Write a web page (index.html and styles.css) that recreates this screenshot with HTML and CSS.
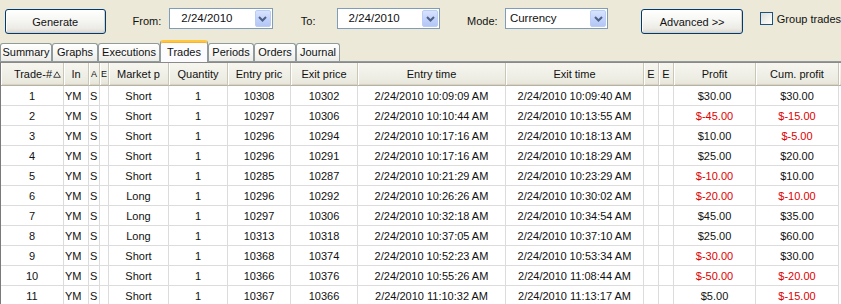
FILE: index.html
```html
<!DOCTYPE html>
<html>
<head>
<meta charset="utf-8">
<link rel="stylesheet" href="styles.css">
</head>
<body>
<div class="toolbar">
  <button class="btn btn-generate">Generate</button>
  <span class="lbl lbl-from">From:</span>
  <div class="combo date">
    <span class="combo-text">2/24/2010</span>
    <span class="dd"><svg width="9" height="6" viewBox="0 0 9 6"><path d="M1 1 L4.5 4.5 L8 1" fill="none" stroke="#4D6185" stroke-width="2"/></svg></span>
  </div>
  <span class="lbl lbl-to">To:</span>
  <div class="combo date">
    <span class="combo-text">2/24/2010</span>
    <span class="dd"><svg width="9" height="6" viewBox="0 0 9 6"><path d="M1 1 L4.5 4.5 L8 1" fill="none" stroke="#4D6185" stroke-width="2"/></svg></span>
  </div>
  <span class="lbl lbl-mode">Mode:</span>
  <div class="combo mode">
    <span class="combo-text">Currency</span>
    <span class="dd"><svg width="9" height="6" viewBox="0 0 9 6"><path d="M1 1 L4.5 4.5 L8 1" fill="none" stroke="#4D6185" stroke-width="2"/></svg></span>
  </div>
  <button class="btn btn-adv">Advanced &gt;&gt;</button>
  <span class="check"></span>
  <span class="lbl lbl-group">Group trades</span>
</div>

<div class="tabs">
  <div class="tab w-summary">Summary</div>
  <div class="tab w-graphs">Graphs</div>
  <div class="tab w-exec">Executions</div>
  <div class="tab tab-sel w-trades">Trades</div>
  <div class="tab w-periods">Periods</div>
  <div class="tab w-orders">Orders</div>
  <div class="tab w-journal">Journal</div>
</div>

<div class="grid">
  <div class="row hdr">
    <div class="c sortcol">Trade-#<svg class="sort" width="8" height="7" viewBox="0 0 8 7"><path d="M4 0.8 L7.3 6.3 L0.7 6.3 Z" fill="none" stroke="#444" stroke-width="1"/></svg></div>
    <div class="c">In</div>
    <div class="c narrow">A</div>
    <div class="c narrow">E</div>
    <div class="c">Market p</div>
    <div class="c">Quantity</div>
    <div class="c">Entry pric</div>
    <div class="c">Exit price</div>
    <div class="c">Entry time</div>
    <div class="c">Exit time</div>
    <div class="c">E</div>
    <div class="c">E</div>
    <div class="c">Profit</div>
    <div class="c">Cum. profit</div>
    <div class="c fill"></div>
  </div>

  <div class="row"><div class="c">1</div><div class="c l">YM</div><div class="c l1">S</div><div class="c"></div><div class="c">Short</div><div class="c">1</div><div class="c">10308</div><div class="c">10302</div><div class="c">2/24/2010 10:09:09 AM</div><div class="c">2/24/2010 10:09:40 AM</div><div class="c"></div><div class="c"></div><div class="c">$30.00</div><div class="c">$30.00</div><div class="fill"></div></div>
  <div class="row"><div class="c">2</div><div class="c l">YM</div><div class="c l1">S</div><div class="c"></div><div class="c">Short</div><div class="c">1</div><div class="c">10297</div><div class="c">10306</div><div class="c">2/24/2010 10:10:44 AM</div><div class="c">2/24/2010 10:13:55 AM</div><div class="c"></div><div class="c"></div><div class="c neg">$-45.00</div><div class="c neg">$-15.00</div><div class="fill"></div></div>
  <div class="row"><div class="c">3</div><div class="c l">YM</div><div class="c l1">S</div><div class="c"></div><div class="c">Short</div><div class="c">1</div><div class="c">10296</div><div class="c">10294</div><div class="c">2/24/2010 10:17:16 AM</div><div class="c">2/24/2010 10:18:13 AM</div><div class="c"></div><div class="c"></div><div class="c">$10.00</div><div class="c neg">$-5.00</div><div class="fill"></div></div>
  <div class="row"><div class="c">4</div><div class="c l">YM</div><div class="c l1">S</div><div class="c"></div><div class="c">Short</div><div class="c">1</div><div class="c">10296</div><div class="c">10291</div><div class="c">2/24/2010 10:17:16 AM</div><div class="c">2/24/2010 10:18:29 AM</div><div class="c"></div><div class="c"></div><div class="c">$25.00</div><div class="c">$20.00</div><div class="fill"></div></div>
  <div class="row"><div class="c">5</div><div class="c l">YM</div><div class="c l1">S</div><div class="c"></div><div class="c">Short</div><div class="c">1</div><div class="c">10285</div><div class="c">10287</div><div class="c">2/24/2010 10:21:29 AM</div><div class="c">2/24/2010 10:23:29 AM</div><div class="c"></div><div class="c"></div><div class="c neg">$-10.00</div><div class="c">$10.00</div><div class="fill"></div></div>
  <div class="row"><div class="c">6</div><div class="c l">YM</div><div class="c l1">S</div><div class="c"></div><div class="c">Long</div><div class="c">1</div><div class="c">10296</div><div class="c">10292</div><div class="c">2/24/2010 10:26:26 AM</div><div class="c">2/24/2010 10:30:02 AM</div><div class="c"></div><div class="c"></div><div class="c neg">$-20.00</div><div class="c neg">$-10.00</div><div class="fill"></div></div>
  <div class="row"><div class="c">7</div><div class="c l">YM</div><div class="c l1">S</div><div class="c"></div><div class="c">Long</div><div class="c">1</div><div class="c">10297</div><div class="c">10306</div><div class="c">2/24/2010 10:32:18 AM</div><div class="c">2/24/2010 10:34:54 AM</div><div class="c"></div><div class="c"></div><div class="c">$45.00</div><div class="c">$35.00</div><div class="fill"></div></div>
  <div class="row"><div class="c">8</div><div class="c l">YM</div><div class="c l1">S</div><div class="c"></div><div class="c">Long</div><div class="c">1</div><div class="c">10313</div><div class="c">10318</div><div class="c">2/24/2010 10:37:05 AM</div><div class="c">2/24/2010 10:37:10 AM</div><div class="c"></div><div class="c"></div><div class="c">$25.00</div><div class="c">$60.00</div><div class="fill"></div></div>
  <div class="row"><div class="c">9</div><div class="c l">YM</div><div class="c l1">S</div><div class="c"></div><div class="c">Short</div><div class="c">1</div><div class="c">10368</div><div class="c">10374</div><div class="c">2/24/2010 10:52:23 AM</div><div class="c">2/24/2010 10:53:34 AM</div><div class="c"></div><div class="c"></div><div class="c neg">$-30.00</div><div class="c">$30.00</div><div class="fill"></div></div>
  <div class="row"><div class="c">10</div><div class="c l">YM</div><div class="c l1">S</div><div class="c"></div><div class="c">Short</div><div class="c">1</div><div class="c">10366</div><div class="c">10376</div><div class="c">2/24/2010 10:55:26 AM</div><div class="c">2/24/2010 11:08:44 AM</div><div class="c"></div><div class="c"></div><div class="c neg">$-50.00</div><div class="c neg">$-20.00</div><div class="fill"></div></div>
  <div class="row"><div class="c">11</div><div class="c l">YM</div><div class="c l1">S</div><div class="c"></div><div class="c">Short</div><div class="c">1</div><div class="c">10367</div><div class="c">10366</div><div class="c">2/24/2010 11:10:32 AM</div><div class="c">2/24/2010 11:13:17 AM</div><div class="c"></div><div class="c"></div><div class="c">$5.00</div><div class="c neg">$-15.00</div><div class="fill"></div></div>
</div>
</body>
</html>
```

FILE: styles.css
```css
html, body {
  margin: 0;
  padding: 0;
  width: 841px;
  height: 304px;
  overflow: hidden;
  background: #ECE9D8;
  font-family: "Liberation Sans", Arial, sans-serif;
  font-size: 11px;
  color: #111;
}

/* ---------- toolbar ---------- */
.toolbar {
  display: flex;
  align-items: flex-start;
  height: 40px;
  padding-top: 8px;
  box-sizing: border-box;
}

.btn {
  font-family: "Liberation Sans", Arial, sans-serif;
  font-size: 11px;
  color: #111;
  height: 25px;
  margin-top: 1px;
  padding: 0;
  border: 1px solid #003C74;
  border-radius: 3px;
  background: linear-gradient(#FFFFFF 0%, #F7F7F4 40%, #ECEBE6 80%, #D9D6CD 100%);
  box-shadow: inset -1px -1px 0 #D6D0C5, inset 1px 1px 0 #FFFFFF;
  box-sizing: border-box;
}
.btn-generate { margin-left: 5px; width: 101px; }
.btn-adv { margin-left: 33px; width: 102px; }

.lbl {
  margin-top: 7px;
  line-height: 13px;
  white-space: nowrap;
}
.lbl-from { margin-left: 27px; width: 37px; }
.lbl-to { margin-left: 28px; width: 36px; }
.lbl-mode { margin-left: 27px; width: 38px; }
.lbl-group { margin-left: 4px; margin-top: 5px; }

.combo {
  display: flex;
  align-items: center;
  width: 104px;
  height: 21px;
  border: 1px solid #7F9DB9;
  background: #fff;
  box-sizing: border-box;
}
.combo-text {
  flex: 1;
  font-size: 11.5px;
  line-height: 13px;
  white-space: nowrap;
}
.date .combo-text { padding-left: 11px; }
.mode .combo-text { padding-left: 4px; }

.dd {
  display: flex;
  align-items: center;
  justify-content: center;
  width: 16px;
  height: 17px;
  margin-right: 1px;
  border: 1px solid #BCCDF5;
  border-radius: 2px;
  background: linear-gradient(#D8E3FD 0%, #C3D3FB 50%, #B3C7F5 100%);
  box-sizing: border-box;
}

.check {
  margin-left: 17px;
  margin-top: 4px;
  width: 13px;
  height: 13px;
  border: 1px solid #1C5180;
  background: linear-gradient(135deg, #DCDCD7 0%, #F5F5F3 70%, #FFFFFF 100%);
  box-sizing: border-box;
}

/* ---------- tabs ---------- */
.tabs {
  display: flex;
  align-items: flex-end;
  height: 22px;
  border-bottom: 1px solid #919B9C;
  box-sizing: border-box;
}
.tab {
  height: 18px;
  line-height: 17px;
  text-align: center;
  border: 1px solid #919B9C;
  border-bottom: none;
  border-radius: 3px 3px 0 0;
  background: linear-gradient(#FFFFFF 0%, #F7F7F5 50%, #ECEBE6 100%);
  box-sizing: border-box;
  white-space: nowrap;
}
.tab-sel {
  height: 22px;
  margin-bottom: -1px;
  line-height: 17px;
  padding-top: 2px;
  background: #FCFCFE;
  border-top: 2px solid #FFC83C;
  box-shadow: inset 0 1px 0 #F2B03E;
}
.w-summary { width: 52px; }
.w-graphs { width: 46px; }
.w-exec { width: 62px; }
.w-trades { width: 48px; }
.w-periods { width: 46px; }
.w-orders { width: 42px; }
.w-journal { width: 44px; }

/* ---------- grid ---------- */
.grid {
  background: #fff;
  border-top: 1px solid #8A8A8A;
  border-left: 1px solid #7A7A7A;
  height: 300px;
}
.row {
  display: grid;
  grid-template-columns: 63px 25px 11px 9px 60px 59px 63px 67px 148px 138px 15px 15px 82px 83px 1fr;
  height: 20px;
}
.c {
  box-sizing: border-box;
  border-right: 1px solid #DCDCDC;
  border-bottom: 1px solid #DCDCDC;
  text-align: center;
  line-height: 20px;
  white-space: nowrap;
  overflow: hidden;
}
.c.l { text-align: left; padding-left: 1px; }
.c.l1 { text-align: left; padding-left: 1px; }
.neg { color: #E00000; }

.hdr {
  height: 23px;
}
.hdr .c {
  line-height: 23px;
  background: linear-gradient(#F6F5EF 0%, #EEEDE4 70%, #E6E4D8 100%);
  border-right: 1px solid #C9C6B6;
  border-bottom: 1px solid #B5B2A4;
  box-shadow: inset 1px 0 0 #FFFFFF, inset 0 -1px 0 #D8D5C6;
}
.hdr .c.fill { border-right: none; }
.hdr .narrow { font-size: 9px; }
.sortcol {
  display: flex;
  align-items: center;
  justify-content: flex-end;
  padding-right: 2px;
}
.sort { margin-left: 1px; }
```
